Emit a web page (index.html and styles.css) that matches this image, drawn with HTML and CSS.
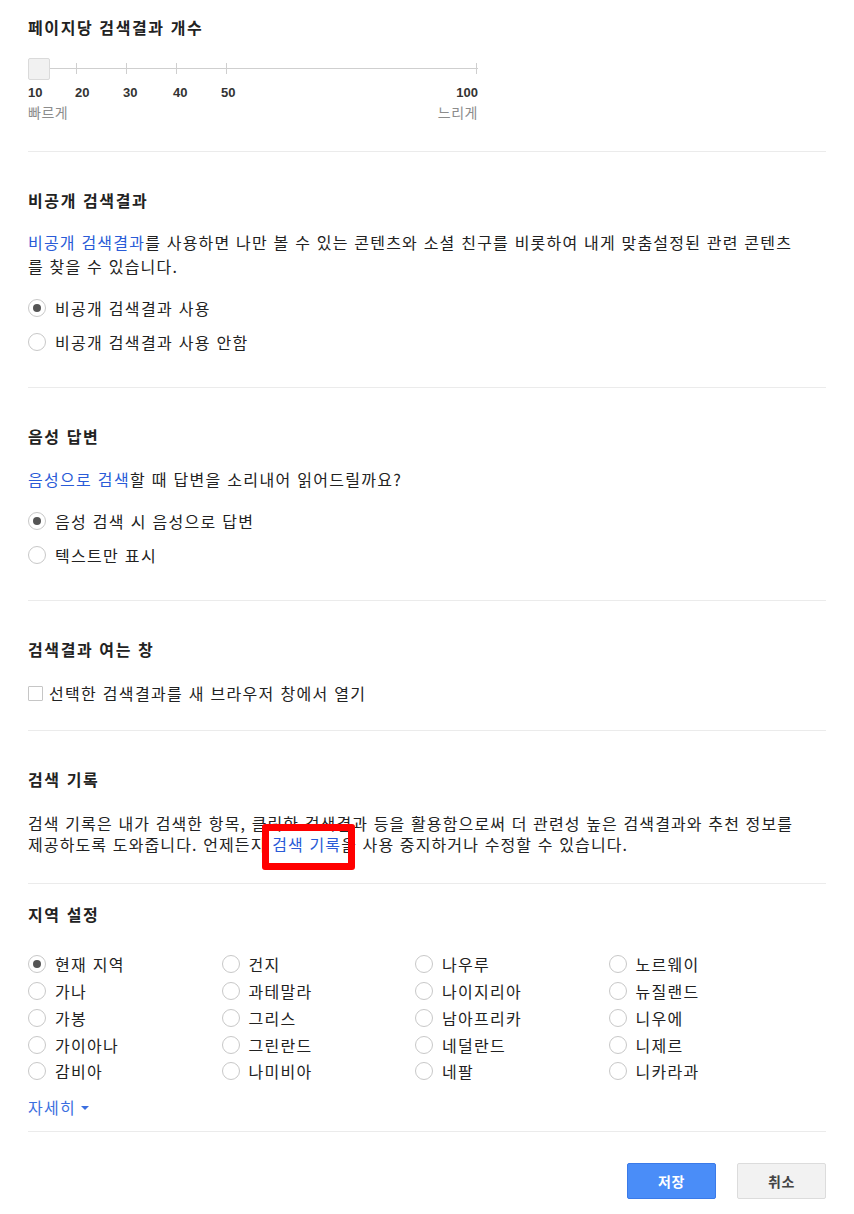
FILE: index.html
```html
<!DOCTYPE html>
<html lang="ko">
<head>
<meta charset="utf-8">
<title>검색 설정</title>
<link rel="stylesheet" href="styles.css">
</head>
<body>
<div class="page">

  <section class="sec sec-results">
    <h2 class="title">페이지당 검색결과 개수</h2>
    <div class="slider">
      <svg class="track" width="452" height="22" viewBox="0 0 452 22">
        <line x1="20" y1="10.5" x2="450" y2="10.5" stroke="#cfcfcf" stroke-width="1"/>
        <line x1="48.5" y1="5" x2="48.5" y2="16" stroke="#cfcfcf" stroke-width="1"/>
        <line x1="98.5" y1="5" x2="98.5" y2="16" stroke="#cfcfcf" stroke-width="1"/>
        <line x1="148.5" y1="5" x2="148.5" y2="16" stroke="#cfcfcf" stroke-width="1"/>
        <line x1="198.5" y1="5" x2="198.5" y2="16" stroke="#cfcfcf" stroke-width="1"/>
        <line x1="448.5" y1="5" x2="448.5" y2="16" stroke="#cfcfcf" stroke-width="1"/>
      </svg>
      <span class="handle"></span>
    </div>
    <div class="nums">
      <span class="n n1">10</span><span class="n n2">20</span><span class="n n3">30</span><span class="n n4">40</span><span class="n n5">50</span><span class="n nlast">100</span>
    </div>
    <div class="speed">
      <span>빠르게</span><span>느리게</span>
    </div>
  </section>

  <section class="sec sec-private">
    <h2 class="title">비공개 검색결과</h2>
    <p class="desc wrapnarrow"><a class="link" href="#">비공개 검색결과</a>를 사용하면 나만 볼 수 있는 콘텐츠와 소셜 친구를 비롯하여 내게 맞춤설정된 관련 콘텐츠를 찾을 수 있습니다.</p>
    <div class="radios">
      <label class="radio"><span class="dot on"></span>비공개 검색결과 사용</label>
      <label class="radio"><span class="dot"></span>비공개 검색결과 사용 안함</label>
    </div>
  </section>

  <section class="sec sec-voice">
    <h2 class="title">음성 답변</h2>
    <p class="desc voice"><a class="link" href="#">음성으로 검색</a>할 때 답변을 소리내어 읽어드릴까요?</p>
    <div class="radios">
      <label class="radio"><span class="dot on"></span>음성 검색 시 음성으로 답변</label>
      <label class="radio"><span class="dot"></span>텍스트만 표시</label>
    </div>
  </section>

  <section class="sec sec-window">
    <h2 class="title">검색결과 여는 창</h2>
    <label class="check"><span class="box"></span>선택한 검색결과를 새 브라우저 창에서 열기</label>
  </section>

  <section class="sec sec-history">
    <h2 class="title">검색 기록</h2>
    <p class="desc2 wrapnarrow">검색 기록은 내가 검색한 항목, 클릭한 검색결과 등을 활용함으로써 더 관련성 높은 검색결과와 추천 정보를 제공하도록 도와줍니다. 언제든지 <a class="link mark" href="#">검색 기록<span class="redbox"></span></a>을 사용 중지하거나 수정할 수 있습니다.</p>
  </section>

  <section class="sec sec-region">
    <h2 class="title">지역 설정</h2>
    <div class="grid">
      <label class="radio r"><span class="dot on"></span>현재 지역</label>
      <label class="radio r"><span class="dot"></span>건지</label>
      <label class="radio r"><span class="dot"></span>나우루</label>
      <label class="radio r"><span class="dot"></span>노르웨이</label>
      <label class="radio r"><span class="dot"></span>가나</label>
      <label class="radio r"><span class="dot"></span>과테말라</label>
      <label class="radio r"><span class="dot"></span>나이지리아</label>
      <label class="radio r"><span class="dot"></span>뉴질랜드</label>
      <label class="radio r"><span class="dot"></span>가봉</label>
      <label class="radio r"><span class="dot"></span>그리스</label>
      <label class="radio r"><span class="dot"></span>남아프리카</label>
      <label class="radio r"><span class="dot"></span>니우에</label>
      <label class="radio r"><span class="dot"></span>가이아나</label>
      <label class="radio r"><span class="dot"></span>그린란드</label>
      <label class="radio r"><span class="dot"></span>네덜란드</label>
      <label class="radio r"><span class="dot"></span>니제르</label>
      <label class="radio r"><span class="dot"></span>감비아</label>
      <label class="radio r"><span class="dot"></span>나미비아</label>
      <label class="radio r"><span class="dot"></span>네팔</label>
      <label class="radio r"><span class="dot"></span>니카라과</label>
    </div>
    <a class="more" href="#">자세히<span class="caret"></span></a>
  </section>

  <div class="actions">
    <button class="btn save">저장</button>
    <button class="btn cancel">취소</button>
  </div>

</div>
</body>
</html>
```

FILE: styles.css
```css
* { box-sizing: border-box; }
html, body { margin: 0; padding: 0; background: #fff; }
body {
  font-family: "Noto Sans CJK KR", "Noto Sans", sans-serif;
  color: #222;
  font-size: 16px;
  letter-spacing: 1.3px;
}
.page {
  width: 798px;
  margin-left: 28px;
}
.sec {
  border-bottom: 1px solid #ebebeb;
}
.title {
  margin: 0;
  font-size: 16px;
  font-weight: bold;
  line-height: 24px;
  color: #222;
  letter-spacing: 1.6px;
}
.link { color: #2a5bd7; text-decoration: none; }
.wrapnarrow { max-width: 772px; }

/* section 1 */
.sec-results { padding-top: 15px; padding-bottom: 30px; }
.slider {
  position: relative;
  margin-top: 19px;
  height: 22px;
  width: 452px;
}
.track { display: block; }
.handle {
  position: absolute;
  left: 0; top: 0;
  width: 22px; height: 22px;
  background: #f1f1f1;
  border: 1px solid #dadada;
  border-radius: 2px;
}
.nums {
  margin-top: 5px;
  display: flex;
  width: 450px;
  font-family: "Liberation Sans", Arial, sans-serif;
  font-weight: bold;
  font-size: 13px;
  line-height: 16px;
  color: #333;
  letter-spacing: 0;
}
.n1 { width: 47px; }
.n2 { width: 48px; }
.n3 { width: 50px; }
.n4 { width: 48px; }
.n5 { width: auto; }
.nlast { margin-left: auto; }
.speed {
  margin-top: 2px;
  width: 450px;
  display: flex;
  justify-content: space-between;
  font-size: 14px;
  line-height: 18px;
  color: #8c8c8c;
  letter-spacing: 0.5px;
}

/* description text */
.desc {
  margin: 18px 0 0;
  line-height: 24px;
  font-size: 16px;
  letter-spacing: 1.2px;
}
.desc.voice { letter-spacing: 1.3px; }
.radios {
  margin-top: 18px;
  display: flex;
  flex-direction: column;
  gap: 10px;
}
.radio {
  display: flex;
  align-items: center;
  height: 24px;
  line-height: 24px;
  font-size: 16px;
}
.dot {
  width: 18px; height: 18px;
  border: 1px solid #c8c8c8;
  border-radius: 50%;
  margin-right: 9px;
  flex: none;
  display: flex;
  align-items: center;
  justify-content: center;
  background: #fff;
}
.dot.on::after {
  content: "";
  width: 8px; height: 8px;
  border-radius: 50%;
  background: #555;
}
.sec-private { padding-top: 36px; padding-bottom: 33px; }
.sec-voice { padding-top: 36px; padding-bottom: 33px; }
.sec-voice .desc { margin-top: 19px; }

.sec-window { padding-top: 36px; padding-bottom: 25px; }
.check {
  margin-top: 20px;
  display: flex;
  align-items: center;
  height: 24px;
  font-size: 16px;
}
.box {
  width: 15px; height: 15px;
  border: 1px solid #c6c6c6;
  border-radius: 1px;
  margin-right: 6px;
  flex: none;
}

.sec-history { padding-top: 36px; padding-bottom: 28px; }
.desc2 {
  margin: 22px 0 0;
  line-height: 21px;
  font-size: 16px;
  letter-spacing: 1.12px;
}
.mark {
  position: relative;
  display: inline-block;
  height: 21px;
  line-height: 21px;
  vertical-align: top;
}
.redbox {
  position: absolute;
  left: -10px; right: -14px;
  top: -10px; bottom: -15px;
  border: 7px solid #ff0000;
  border-radius: 3px;
}

.sec-region { padding-top: 18px; padding-bottom: 12px; }
.grid {
  margin-top: 25px;
  display: grid;
  grid-template-columns: repeat(4, 193.5px);
  grid-auto-rows: 26.75px;
}
.r { height: 26.75px; }
.more {
  display: inline-flex;
  align-items: center;
  margin-top: 10px;
  line-height: 24px;
  color: #3b6fe0;
  text-decoration: none;
  font-size: 16px;
}
.caret {
  width: 0; height: 0;
  border-left: 4px solid transparent;
  border-right: 4px solid transparent;
  border-top: 4px solid #3b6fe0;
  margin-left: 5px;
  margin-top: 2px;
}

.actions {
  margin-top: 31px;
  display: flex;
  justify-content: flex-end;
  gap: 21px;
}
.btn {
  width: 89px;
  height: 36px;
  border-radius: 2px;
  font-family: "Noto Sans CJK KR", sans-serif;
  font-weight: bold;
  font-size: 14px;
  letter-spacing: 0.5px;
  cursor: pointer;
}
.save {
  background: #4a8df8;
  border: 1px solid #3b7ae8;
  color: #fff;
}
.cancel {
  background: #f2f2f2;
  border: 1px solid #dcdcdc;
  color: #444;
}
```
